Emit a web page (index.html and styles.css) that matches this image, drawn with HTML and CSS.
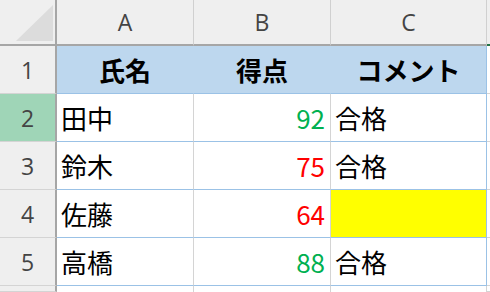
FILE: index.html
```html
<!DOCTYPE html>
<html lang="ja">
<head>
  <meta charset="UTF-8">
  <title>成績表</title>
  <link rel="stylesheet" href="styles.css">
</head>
<body>
  <!-- シート本体 -->
  <div class="sheet">
    <!-- 列見出し -->
    <div class="corner">
      <svg width="55" height="44" viewBox="0 0 55 44">
        <polygon points="16,41 53,41 53,5" fill="#dcdcdc"/>
      </svg>
    </div>
    <div class="col-head">A</div>
    <div class="col-head">B</div>
    <div class="col-head">C</div>
    <div class="col-head col-active"></div>

    <!-- 1行目: 見出し -->
    <div class="row-head">1</div>
    <div class="cell th">氏名</div>
    <div class="cell th">得点</div>
    <div class="cell th last">コメント</div>
    <div class="cell out"></div>

    <div class="row-head row-active">2</div>
    <div class="cell">田中</div>
    <div class="cell num pass">92</div>
    <div class="cell last">合格</div>
    <div class="cell out"></div>

    <div class="row-head">3</div>
    <div class="cell">鈴木</div>
    <div class="cell num fail">75</div>
    <div class="cell last">合格</div>
    <div class="cell out"></div>

    <div class="row-head">4</div>
    <div class="cell">佐藤</div>
    <div class="cell num fail">64</div>
    <div class="cell last mark"></div>
    <div class="cell out"></div>

    <div class="row-head">5</div>
    <div class="cell">高橋</div>
    <div class="cell num pass">88</div>
    <div class="cell last">合格</div>
    <div class="cell out"></div>

    <!-- 6行目（見切れ） -->
    <div class="row-head"></div>
    <div class="cell blank"></div>
    <div class="cell blank"></div>
    <div class="cell blank"></div>
    <div class="cell out"></div>
  </div>
</body>
</html>
```

FILE: styles.css
```css
* {
  margin: 0;
  padding: 0;
  box-sizing: border-box;
}

html, body {
  width: 490px;
  height: 292px;
  overflow: hidden;
  background: #fff;
}

body {
  font-family: "Noto Sans CJK JP", "Noto Sans", sans-serif;
  color: #000;
}

/* シートのグリッド */
.sheet {
  display: grid;
  grid-template-columns: 57px 137px 137px 156px 3px;
  grid-template-rows: 46px repeat(5, 48px) 6px;
}

/* 左上の角 */
.corner {
  background: #efefef;
  border-right: 2px solid #a6a6a6;
  border-bottom: 2px solid #a6a6a6;
}

.corner svg {
  display: block;
}

/* 列見出し */
.col-head {
  display: flex;
  align-items: center;
  justify-content: center;
  background: #efefef;
  border-right: 1px solid #d0d0d0;
  border-bottom: 2px solid #a6a6a6;
  font-family: "Open Sans", "Noto Sans", sans-serif;
  font-size: 23px;
  color: #444;
}

.col-active {
  border-bottom-color: #217346;
  border-right: none;
}

/* 行見出し */
.row-head {
  display: flex;
  align-items: center;
  justify-content: center;
  background: #efefef;
  border-right: 2px solid #a6a6a6;
  border-bottom: 1px solid #d4d4d4;
  font-family: "Open Sans", "Noto Sans", sans-serif;
  font-size: 23px;
  color: #444;
}

.row-active {
  background: #9fd5b7;
}

/* セル */
.cell {
  display: flex;
  align-items: center;
  padding: 0 4px;
  font-size: 26px;
  border-right: 1px solid #d4d4d4;
  border-bottom: 1px solid #9bc2e6;
}

.cell.th {
  justify-content: center;
  font-weight: bold;
  background: #bdd7ee;
  border-right-color: #bdd7ee;
}

.cell.last {
  border-right-color: #9bc2e6;
}

.cell.num {
  justify-content: flex-end;
  padding-right: 5px;
}

.pass {
  color: #00b050;
}

.fail {
  color: #ff0000;
}

.mark {
  background: #ffff00;
}

.cell.out {
  border-right: none;
  border-bottom-color: #d4d4d4;
}

.cell.blank {
  border-bottom: none;
}
```
